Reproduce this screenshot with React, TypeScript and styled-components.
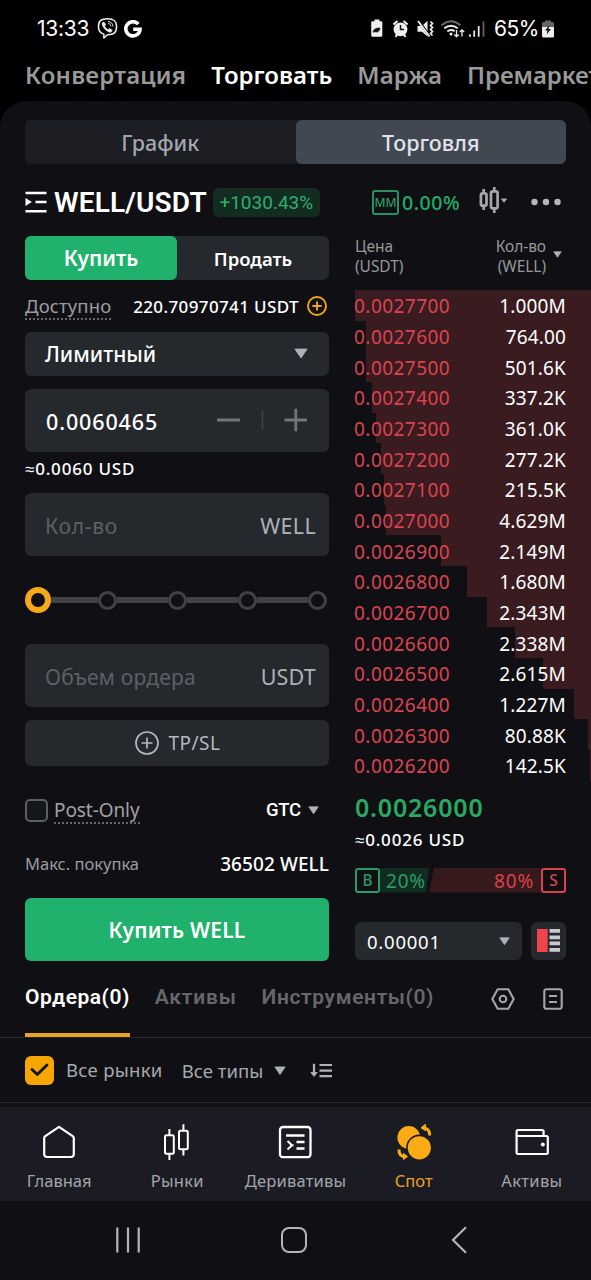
import React from 'react';
import styled, { createGlobalStyle } from 'styled-components';

const asks = [
  { price: '0.0027700', amount: '1.000M', depth: 236 },
  { price: '0.0027600', amount: '764.00', depth: 225 },
  { price: '0.0027500', amount: '501.6K', depth: 225 },
  { price: '0.0027400', amount: '337.2K', depth: 219 },
  { price: '0.0027300', amount: '361.0K', depth: 215 },
  { price: '0.0027200', amount: '277.2K', depth: 210 },
  { price: '0.0027100', amount: '215.5K', depth: 207 },
  { price: '0.0027000', amount: '4.629M', depth: 205 },
  { price: '0.0026900', amount: '2.149M', depth: 150 },
  { price: '0.0026800', amount: '1.680M', depth: 124 },
  { price: '0.0026700', amount: '2.343M', depth: 104 },
  { price: '0.0026600', amount: '2.338M', depth: 76 },
  { price: '0.0026500', amount: '2.615M', depth: 48 },
  { price: '0.0026400', amount: '1.227M', depth: 17 },
  { price: '0.0026300', amount: '80.88K', depth: 3 },
  { price: '0.0026200', amount: '142.5K', depth: 1 },
];

const Caret = ({ width = 14, color = '#adb1b8' }: { width?: number; color?: string }) => (
  <svg width={width} height={width * 0.8} viewBox="0 0 14 11" fill={color} stroke={color} strokeLinejoin="round">
    <path d="M1 1h12L7 9.8z" />
  </svg>
);

const StatusIcons = () => (
  <svg width="118" height="22" viewBox="0 0 118 22" fill="none" stroke="#eee" strokeWidth="1.6">
    {/* power saving */}
    <path d="M3.500 3.200h2V1.600h5v1.600h1.500q1.300 0 1.300 1.300v13q0 1.300-1.300 1.300H3.500q-1.300 0-1.300-1.300v-13q0-1.300 1.300-1.300z" fill="#eee" stroke="none" />
    <path d="M4.200 14.500c-.3-3 2.500-4.500 6.700-4.500-.2 3.300-2.500 4.700-5.200 3.800l3.400-2" fill="#111" stroke="#111" strokeWidth=".7" />
    {/* alarm */}
    <circle cx="31.500" cy="11.300" r="6.900" fill="#eee" stroke="none" />
    <path d="M31.500 7v4.500h3.500" stroke="#111" strokeWidth="1.500" />
    <path d="M24.500 6.500l4-3.500M38.500 6.500l-4-3.500M26.500 18.800l1.500-2M36.500 18.800l-1.500-2" strokeWidth="2.200" />
    {/* muted */}
    <path d="M48.500 8h4.500l5.500-5.300v15.800L53 13.700h-4.500z" fill="#eee" stroke="none" />
    <path d="M49.500 2.500l11 15.500" stroke="#000" strokeWidth="2.600" />
    <path d="M49 3l11.500 15.500" strokeWidth="1.900" />
    <path d="M61.500 3.500l2 2-2 2 2 2-2 2 2 2-2 2 2 2" strokeWidth="1.700" />
    {/* wifi */}
    <path d="M72.500 7.200q9.500-8 19 0" stroke="#666" strokeWidth="2" />
    <path d="M75.300 10.300q6.700-5.200 13.400 0M78.300 13.500q3.700-2.800 7.300-.3" strokeWidth="1.900" />
    <circle cx="82" cy="16" r="1.500" fill="#eee" stroke="none" />
    <path d="M87.500 12v6.500M85.300 16.500l2.200 2.200 2.200-2.200M93 18.500V12M90.800 14l2.200-2.200L95.200 14" strokeWidth="1.300" />
    {/* signal */}
    <path d="M101 18.800v-2.600M105.200 18.800v-6.400M109.700 18.800V8" strokeWidth="1.700" />
    <path d="M114.500 18.800V3.500" stroke="#666" strokeWidth="1.700" />
  </svg>
);

const ViberIcon = () => (
  <svg width="21" height="23" viewBox="0 0 22 23" fill="none" stroke="#eee" strokeWidth="1.600" strokeLinejoin="round">
    <path d="M11 1.200c6.500 0 9.500 2 9.500 8.300 0 6.200-2.600 8.600-9.500 8.500l-3.800 3.400v-4C2.800 16.200 1.500 14 1.500 9.500c0-6.300 3-8.300 9.500-8.300z" />
    <path d="M6.800 4.800c-1.500.8-1.700 1.800-1 3.500 1.400 3.400 3.700 5.700 7.200 7 1.500.5 2.500-.3 2.900-1.600.1-.6-2.300-2.300-2.900-2.200-.6.200-.9 1.200-1.500 1.100-1.500-.5-3-2-3.500-3.600 0-.6 1-.9 1-1.500 0-.7-1.600-2.800-2.200-2.700z" fill="#eee" stroke="#eee" strokeWidth=".6" />
    <path d="M11.500 4.200c3.200.1 5 2 5.200 5.200M11.700 6.300c1.800.2 2.700 1.200 2.900 3" strokeWidth="1" />
  </svg>
);

const GoogleIcon = () => (
  <svg width="18" height="18" viewBox="0 0 18 18" fill="none" stroke="#fff" strokeWidth="3.600">
    <path d="M14.300 4.100A7.100 7.100 0 1 0 16 9.300H9.200" />
  </svg>
);

const ChargeIcon = () => (
  <svg width="12" height="18" viewBox="0 0 12 18">
    <path d="M1.500 2H3V.5h6V2h1.500Q12 2 12 3.500V8H0V3.500Q0 2 1.500 2z" fill="#666" />
    <path d="M0 7h12v9q0 1.500-1.500 1.500h-9Q0 17.500 0 16z" fill="#eee" />
    <path d="M7.500 5L3 10.500h2.500l-.8 4 4.300-5.500H6.500z" fill="#111" />
  </svg>
);

const MenuIcon = () => (
  <svg width="22" height="22" viewBox="0 0 22 22" fill="none" stroke="#fff" strokeWidth="2.500">
    <path d="M.5 2h21M10.500 11h11M.5 20.200h21" />
    <path d="M.5 7v8l6.300-4z" fill="#fff" stroke="none" />
  </svg>
);

const CandleMenuIcon = () => (
  <svg width="29" height="28" viewBox="0 0 29 28" fill="none" stroke="#a3a6ad" strokeWidth="2.700">
    <rect x="1.900" y="7.300" width="5.600" height="12.400" rx="1.800" />
    <rect x="12" y="5.300" width="6.600" height="17" rx="1.800" />
    <path d="M4.700 3v4M4.700 20v4M15.300 1v4M15.300 22v5" />
    <path d="M22.500 13h5l-2.500 3.200z" fill="#a3a6ad" strokeWidth="1" strokeLinejoin="round" />
  </svg>
);

const DotsIcon = () => (
  <svg width="30" height="8" viewBox="0 0 30 8" fill="#b4b7bd">
    <circle cx="3.500" cy="4" r="3.200" />
    <circle cx="15" cy="4" r="3.200" />
    <circle cx="26.500" cy="4" r="3.200" />
  </svg>
);

const PlusCircle = ({ size, color, weight }: { size: number; color: string; weight: number }) => (
  <svg width={size} height={size} viewBox={`0 0 ${size} ${size}`} fill="none" stroke={color} strokeWidth={weight}>
    <circle cx={size / 2} cy={size / 2} r={size / 2 - 1} />
    <path d={`M${size / 2} ${size * 0.27}v${size * 0.46}M${size * 0.27} ${size / 2}h${size * 0.46}`} />
  </svg>
);

const StepperIcon = () => (
  <svg width="92" height="24" viewBox="0 0 92 24" fill="none" stroke="#717479" strokeWidth="2.800">
    <path d="M1 12h23M68.500 12H91M79.800 .8v22.400" />
    <path d="M46.500 2.500v19" stroke="#42454a" strokeWidth="1.500" />
  </svg>
);

const BookModeIcon = () => (
  <svg width="23" height="23" viewBox="0 0 23 23">
    <path d="M0 0h10.700v23H0z" fill="#ef454a" />
    <path d="M12.500 0H23v3.800H12.500zM12.500 6.400H23v3.800H12.500zM12.500 12.600H23v3.600H12.500zM12.500 19H23v3.800H12.500z" fill="#c9cbce" />
  </svg>
);

const HexIcon = () => (
  <svg width="24" height="22" viewBox="0 0 24 22" fill="none" stroke="#a5a6aa" strokeWidth="2.100" strokeLinejoin="round">
    <path d="M6.700 1.300h10.600L22.700 11l-5.400 9.700H6.700L1.300 11z" />
    <circle cx="12" cy="11" r="3.300" />
  </svg>
);

const ListIcon = () => (
  <svg width="20" height="22" viewBox="0 0 20 22" fill="none" stroke="#a5a6aa" strokeWidth="2.100">
    <rect x="1.300" y="1.200" width="17.400" height="19.600" rx="2" />
    <path d="M6 8h8M6 14h8" />
  </svg>
);

const SortIcon = () => (
  <svg width="22" height="15" viewBox="0 0 22 15" fill="none" stroke="#b0b1b5" strokeWidth="2.200">
    <path d="M4 .8v10M9.500 2H22M9.500 7.700H22M9.500 13.200H22" />
    <path d="M.8 9.500h6.400L4 13.500z" fill="#b0b1b5" strokeWidth=".8" />
  </svg>
);

const HomeIcon = () => (
  <svg width="36" height="36" viewBox="0 0 36 36" fill="none" stroke="#fff" strokeWidth="2.200" strokeLinejoin="round">
    <path d="M18 2.800L31.700 12.200q1.100.8 1.100 2.200V30q0 3-3 3H6.200q-3 0-3-3V14.400q0-1.400 1.100-2.200z" />
  </svg>
);

const MarketsIcon = () => (
  <svg width="36" height="36" viewBox="0 0 36 36" fill="none" stroke="#fff" strokeWidth="2">
    <rect x="6" y="11.200" width="8.800" height="18.600" rx="1.500" />
    <rect x="20" y="6.700" width="8.800" height="18.600" rx="1.500" />
    <path d="M10.400 5v6M10.400 30v6M24.400 .2v6M24.400 25.500v6" />
  </svg>
);

const DerivativesIcon = () => (
  <svg width="36" height="36" viewBox="0 0 36 36" fill="none" stroke="#fff" strokeWidth="2.300">
    <rect x="3" y="3" width="30.500" height="30.200" rx="3" />
    <path d="M9 11.500h18.500M19.500 18h8M19.500 24.500h8" />
    <path d="M10.500 17l4.500 4.200-4.500 4.200M13 21.200h3.500" strokeWidth="2" />
  </svg>
);

const SpotIcon = () => (
  <svg width="36" height="36" viewBox="0 0 36 36" fill="#fbac15">
    <circle cx="12.800" cy="13.500" r="11.400" />
    <circle cx="23.300" cy="23.800" r="12.400" stroke="#1b1c23" strokeWidth="1.600" />
    <path d="M27 4.200c4.800-.2 6.700 2.500 6.700 7.300" fill="none" stroke="#fbac15" strokeWidth="3" />
    <path d="M29.500 .2v6.500L25 3.800z" stroke="#fbac15" strokeWidth="1" strokeLinejoin="round" />
    <path d="M3 25.500c-.2 4.500 1.800 7.200 6 7.200" fill="none" stroke="#fbac15" strokeWidth="3" />
    <path d="M7.500 29.500v6L11.500 32.500z" stroke="#fbac15" strokeWidth="1" strokeLinejoin="round" />
  </svg>
);

const WalletIcon = () => (
  <svg width="36" height="36" viewBox="0 0 36 36" fill="none" stroke="#fff" strokeWidth="2.200" strokeLinejoin="round">
    <path d="M2.600 12.200V7.500q0-1.500 1.500-1.500h24q1.500 0 1.500 1.500v4.700" />
    <path d="M2.600 12h29.800q1.400 0 1.400 1.400v15.200q0 1.400-1.400 1.400H4q-1.400 0-1.400-1.400z" />
    <circle cx="28.800" cy="20.500" r="2" fill="#fff" stroke="none" />
  </svg>
);

const navItems = [
  { label: 'Главная', icon: <HomeIcon />, spacing: 0 },
  { label: 'Рынки', icon: <MarketsIcon />, spacing: 0.3 },
  { label: 'Деривативы', icon: <DerivativesIcon />, spacing: 0.18 },
  { label: 'Спот', icon: <SpotIcon />, spacing: 0, active: true },
  { label: 'Активы', icon: <WalletIcon />, spacing: 0.35 },
];

const App = () => (
  <>
    <GlobalStyle />
    <Screen>
      <StatusBar>
        <StatusGroup>
          <Clock>13:33</Clock>
          <ViberIcon />
          <GoogleIcon />
        </StatusGroup>
        <StatusGroup>
          <StatusIcons />
          <Percent>65%</Percent>
          <ChargeIcon />
        </StatusGroup>
      </StatusBar>

      <TopTabs>
        <TopTab $spacing={0.2}>Конвертация</TopTab>
        <TopTab $active>Торговать</TopTab>
        <TopTab $spacing={0.15}>Маржа</TopTab>
        <TopTab $spacing={-0.1}>Премаркет</TopTab>
      </TopTabs>

      <Panel>
        <Segmented>
          <Segment>График</Segment>
          <Segment $active>Торговля</Segment>
        </Segmented>

        <PairRow>
          <MenuIcon />
          <PairName>WELL/USDT</PairName>
          <Change>+1030.43%</Change>
          <PairTools>
            <MarketMaker>MM</MarketMaker>
            <Fee>0.00%</Fee>
            <CandleMenuIcon />
            <DotsIcon />
          </PairTools>
        </PairRow>

        <Trade>
          <Form>
            <Sides>
              <Side $active>Купить</Side>
              <Side>Продать</Side>
            </Sides>
            <Available>
              <Hint>Доступно</Hint>
              <Balance>
                220.70970741 USDT
                <PlusCircle size={20} color="#f0a616" weight={1.900} />
              </Balance>
            </Available>
            <OrderType>
              Лимитный
              <Caret />
            </OrderType>
            <Field>
              <Price>0.0060465</Price>
              <StepperIcon />
            </Field>
            <Approx>≈0.0060 USD</Approx>
            <Field>
              <Placeholder $spacing={0.75}>Кол-во</Placeholder>
              <Unit $spacing={0.3}>WELL</Unit>
            </Field>
            <Slider>
              <Thumb />
              <Track $first /><Stop />
              <Track /><Stop />
              <Track /><Stop />
              <Track /><Stop />
            </Slider>
            <Field>
              <Placeholder $spacing={0.22}>Объем ордера</Placeholder>
              <Unit $spacing={0.2}>USDT</Unit>
            </Field>
            <TpSl>
              <PlusCircle size={24} color="#b4b8c0" weight={1.700} />
              TP/SL
            </TpSl>
            <Options>
              <Checkbox />
              <PostOnly>Post-Only</PostOnly>
              <Tif>
                GTC
                <Caret width={11} />
              </Tif>
            </Options>
            <MaxRow>
              <MaxLabel>Макс. покупка</MaxLabel>
              <MaxValue>36502 WELL</MaxValue>
            </MaxRow>
            <BuyButton>Купить WELL</BuyButton>
          </Form>

          <Book>
            <BookHead>
              <HeadCell>Цена<br />(USDT)</HeadCell>
              <HeadCell $right>Кол-во<br />(WELL)</HeadCell>
              <Caret width={9} />
            </BookHead>
            {asks.map((ask) => (
              <BookRow key={ask.price} style={{ backgroundSize: `${ask.depth}px 100%` }}>
                <AskPrice>{ask.price}</AskPrice>
                <Amount>{ask.amount}</Amount>
              </BookRow>
            ))}
            <LastPrice>0.0026000</LastPrice>
            <LastUsd>≈0.0026 USD</LastUsd>
            <Ratio>
              <RatioBadge>B</RatioBadge>
              <BuyShare>20%</BuyShare>
              <SellShare>80%</SellShare>
              <RatioBadge $sell>S</RatioBadge>
            </Ratio>
            <BookFooter>
              <Step>
                0.00001
                <Caret width={11} />
              </Step>
              <BookMode><BookModeIcon /></BookMode>
            </BookFooter>
          </Book>
        </Trade>

        <OrderTabs>
          <OrderTab $active $spacing={0.5}>Ордера(0)</OrderTab>
          <OrderTab $spacing={0.8}>Активы</OrderTab>
          <OrderTab $spacing={0.62}>Инструменты(0)</OrderTab>
          <OrderTools>
            <HexIcon />
            <ListIcon />
          </OrderTools>
        </OrderTabs>

        <Filters>
          <Checked>
            <svg width="19" height="14" viewBox="0 0 19 14" fill="none" stroke="#15120a" strokeWidth="2.800" strokeLinecap="round" strokeLinejoin="round">
              <path d="M2 6.500l5.300 5L17 2" />
            </svg>
          </Checked>
          <FilterText>Все рынки</FilterText>
          <TypeFilter>
            Все типы
            <Caret width={12} />
          </TypeFilter>
          <SortIcon />
        </Filters>
      </Panel>

      <BottomNav>
        {navItems.map((item) => (
          <NavItem key={item.label} $active={item.active} $spacing={item.spacing}>
            {item.icon}
            {item.label}
          </NavItem>
        ))}
      </BottomNav>

      <SystemNav>
        <svg width="26" height="26" viewBox="0 0 26 26" stroke="#b5b3b8" strokeWidth="2.200">
          <path d="M2.300 .5v25M13 .5v25M23.700 .5v25" />
        </svg>
        <HomeKey />
        <svg width="16" height="28" viewBox="0 0 16 28" fill="none" stroke="#b5b3b8" strokeWidth="2.200">
          <path d="M15 1.200L2 14l13 12.800" />
        </svg>
      </SystemNav>
    </Screen>
  </>
);

interface Spaced {
  $spacing?: number;
}

interface Toggle {
  $active?: boolean;
}

const GlobalStyle = createGlobalStyle`
  * {
    box-sizing: border-box;
  }

  body {
    margin: 0;
    background: #000;
  }

  svg {
    display: block;
    flex: none;
  }
`;

const Screen = styled.div`
  width: 591px;
  height: 1280px;
  display: flex;
  flex-direction: column;
  overflow: hidden;
  background: #000;
  color: #fff;
  font-family: 'Noto Sans', sans-serif;
  white-space: nowrap;
`;

const StatusBar = styled.header`
  height: 56px;
  padding: 1px 37px 0 37px;
  display: flex;
  align-items: center;
  justify-content: space-between;
  font-family: 'Inter', sans-serif;
  font-size: 21px;
`;

const StatusGroup = styled.div`
  display: flex;
  align-items: center;
  gap: 6px;
`;

const Clock = styled.span`
  margin-right: 2px;
  letter-spacing: -0.25px;
`;

const Percent = styled.span`
  margin: 0 -3px 0 1px;
  letter-spacing: -0.5px;
`;

const TopTabs = styled.nav`
  height: 45px;
  padding: 0 0 9px 25px;
  display: flex;
  align-items: center;
  gap: 25px;
`;

const TopTab = styled.span<Toggle & Spaced>`
  font-size: 24px;
  font-weight: 600;
  letter-spacing: ${(props) => props.$spacing || 0}px;
  color: ${(props) => (props.$active ? '#fff' : '#9a9a9a')};
`;

const Panel = styled.main`
  height: 1006px;
  flex: none;
  padding-top: 19px;
  display: flex;
  flex-direction: column;
  border-radius: 26px 26px 0 0;
  background: #101014;
`;

const Segmented = styled.div`
  height: 44px;
  margin: 0 25px;
  display: grid;
  grid-template-columns: 1fr 1fr;
  border-radius: 6px;
  background: #1d1d24;
`;

const Segment = styled.div<Toggle>`
  display: flex;
  align-items: center;
  justify-content: center;
  border-radius: 6px;
  font-size: 21.5px;
  font-weight: 500;
  background: ${(props) => (props.$active ? '#414852' : 'transparent')};
  color: ${(props) => (props.$active ? '#e0e4ec' : '#a3a6af')};
`;

const PairRow = styled.div`
  height: 72px;
  padding: 4px 30px 0 25px;
  display: flex;
  align-items: center;
`;

const PairName = styled.span`
  margin-left: 7px;
  font-family: 'Roboto', sans-serif;
  font-size: 28px;
  font-weight: 600;
  letter-spacing: 0.15px;
`;

const Change = styled.span`
  width: 107px;
  height: 29px;
  margin-left: 6px;
  border-radius: 6px;
  background: #132c22;
  color: #2fae6e;
  font-family: 'Roboto', sans-serif;
  font-size: 19px;
  line-height: 29px;
  text-align: center;
`;

const PairTools = styled.div`
  margin-left: auto;
  display: flex;
  align-items: center;
`;

const MarketMaker = styled.span`
  width: 27px;
  height: 25px;
  border: 2px solid #2a8f60;
  border-radius: 3px;
  color: #2d9a67;
  font-size: 12px;
  font-weight: 500;
  line-height: 21px;
  text-align: center;
`;

const Fee = styled.span`
  margin: 0 19px 0 3px;
  color: #22ac6b;
  font-size: 19.5px;
  font-weight: 500;
  letter-spacing: 0.5px;

  & + svg {
    margin: -5px 23px 0 0;
  }
`;

const Trade = styled.section`
  height: 725px;
  padding-left: 25px;
  display: grid;
  grid-template-columns: 304px 236px;
  justify-content: space-between;
`;

const Form = styled.div`
  display: flex;
  flex-direction: column;
`;

const Sides = styled.div`
  height: 44px;
  display: grid;
  grid-template-columns: 1fr 1fr;
  border-radius: 6px;
  background: #25282c;
`;

const Side = styled.div<Toggle>`
  display: flex;
  align-items: center;
  justify-content: center;
  border-radius: 6px;
  background: ${(props) => (props.$active ? '#20b26c' : 'transparent')};
  font-size: ${(props) => (props.$active ? 21 : 18.5)}px;
  font-weight: 600;
`;

const Available = styled.div`
  height: 52px;
  display: flex;
  align-items: center;
  justify-content: space-between;
`;

const Hint = styled.span`
  margin-top: 1px;
  border-bottom: 2px dotted #66676b;
  color: #9b9ca0;
  font-size: 18.5px;
  line-height: 24px;
  letter-spacing: 0.15px;
`;

const Balance = styled.span`
  display: flex;
  align-items: center;
  gap: 8px;
  margin-right: 2px;
  font-size: 17px;
  font-weight: 500;
  letter-spacing: 0.38px;
`;

const OrderType = styled.div`
  height: 44px;
  margin-bottom: 13px;
  padding: 0 21px 0 20px;
  display: flex;
  align-items: center;
  justify-content: space-between;
  border-radius: 6px;
  background: #25282c;
  font-size: 21px;
  font-weight: 500;
`;

const Field = styled.div`
  height: 63px;
  padding: 2px 13px 0 20px;
  display: flex;
  align-items: center;
  justify-content: space-between;
  border-radius: 6px;
  background: #25282c;

  svg {
    margin: -3px 8px 0 0;
  }
`;

const Price = styled.span`
  margin-left: 1px;
  font-size: 21.5px;
  font-weight: 500;
  letter-spacing: 0.88px;
`;

const Placeholder = styled.span<Spaced>`
  color: #5d6065;
  font-size: 21px;
  letter-spacing: ${(props) => props.$spacing}px;
`;

const Unit = styled.span<Spaced>`
  color: #adb1b8;
  font-size: 21.5px;
  letter-spacing: ${(props) => props.$spacing}px;
`;

const Approx = styled.div`
  height: 41px;
  font-size: 17px;
  font-weight: 500;
  line-height: 33px;
  letter-spacing: 0.81px;
`;

const Slider = styled.div`
  height: 88px;
  padding-right: 2px;
  display: flex;
  align-items: center;
`;

const Thumb = styled.div`
  width: 26px;
  height: 26px;
  border: 6px solid #f7a81b;
  border-radius: 50%;
`;

/* the thumb is wider than a stop, so the first stretch is shorter */
const Track = styled.div<{ $first?: boolean }>`
  flex: ${(props) => (props.$first ? '0 0 47.4px' : 1)};
  height: 6px;
  background: #414146;
`;

const Stop = styled.div`
  width: 19px;
  height: 19px;
  border: 3px solid #414146;
  border-radius: 50%;
`;

const TpSl = styled.div`
  height: 46px;
  margin-top: 13px;
  padding-left: 2px;
  display: flex;
  align-items: center;
  justify-content: center;
  gap: 9px;
  border-radius: 6px;
  background: #25282c;
  color: #b4b8c0;
  font-size: 19px;
  letter-spacing: 0.5px;
`;

const Options = styled.div`
  height: 88px;
  display: flex;
  align-items: center;
`;

const Checkbox = styled.span`
  width: 23px;
  height: 23px;
  border: 2px solid #5c5f63;
  border-radius: 5px;
  background: #14171a;
`;

const PostOnly = styled.span`
  margin: 1px 0 0 6px;
  border-bottom: 2px dotted #66676b;
  color: #a0a1a5;
  font-size: 19px;
  line-height: 24px;
  letter-spacing: -0.08px;
`;

const Tif = styled.span`
  margin: 0 10px 0 auto;
  display: flex;
  align-items: center;
  gap: 7px;
  font-family: 'Roboto', sans-serif;
  font-size: 18.5px;
  font-weight: 500;
  letter-spacing: -0.2px;
`;

const MaxRow = styled.div`
  height: 20px;
  margin-bottom: 24px;
  padding-bottom: 1px;
  display: flex;
  align-items: center;
  justify-content: space-between;
`;

const MaxLabel = styled.span`
  color: #9b9ca0;
  font-size: 16.5px;
`;

const MaxValue = styled.span`
  font-size: 19px;
  font-weight: 500;
  letter-spacing: 0.08px;
`;

const BuyButton = styled.button`
  height: 63px;
  padding: 0;
  border: none;
  border-radius: 6px;
  background: #20b26c;
  color: #fff;
  font: 600 21px 'Noto Sans', sans-serif;
  letter-spacing: 0.2px;
`;

const Book = styled.div`
  display: flex;
  flex-direction: column;
`;

const BookHead = styled.div`
  height: 54px;
  padding: 0 29px 14px 0;
  display: flex;
  align-items: center;
  gap: 7px;

  svg {
    margin-top: -3px;
  }
`;

const HeadCell = styled.div<{ $right?: boolean }>`
  margin-left: ${(props) => (props.$right ? 'auto' : 0)};
  color: #96979b;
  font-size: 15.5px;
  line-height: 20px;
  letter-spacing: -0.05px;
  text-align: ${(props) => (props.$right ? 'right' : 'left')};
`;

const BookRow = styled.div`
  height: 30.667px;
  padding: 2px 25px 0 0;
  display: flex;
  align-items: center;
  justify-content: space-between;
  background: linear-gradient(#3a1b1f, #3a1b1f) right top no-repeat;
  font-size: 19px;
`;

const AskPrice = styled.span`
  margin-left: -1px;
  color: #dc4350;
  letter-spacing: 0.46px;
`;

const Amount = styled.span`
  letter-spacing: 0.15px;
`;

const LastPrice = styled.div`
  height: 43px;
  padding-top: 10px;
  color: #2aa862;
  font-size: 25px;
  font-weight: 600;
  line-height: 33px;
  letter-spacing: 0.8px;
`;

const LastUsd = styled.div`
  height: 44px;
  font-size: 17px;
  font-weight: 500;
  line-height: 32px;
  letter-spacing: 0.81px;
`;

const Ratio = styled.div`
  height: 25px;
  margin-right: 25px;
  display: flex;
  font-size: 19px;
  line-height: 27px;
`;

const RatioBadge = styled.span<{ $sell?: boolean }>`
  width: 25px;
  border: 2px solid ${(props) => (props.$sell ? '#d9424c' : '#289a63')};
  border-radius: 3px;
  color: ${(props) => (props.$sell ? '#d9424c' : '#289a63')};
  font-size: 15.5px;
  font-weight: 500;
  line-height: 21px;
  text-align: center;
`;

const BuyShare = styled.span`
  width: 49px;
  padding-left: 6px;
  background: #112b20;
  color: #2a9d66;
  letter-spacing: 0.8px;
  clip-path: polygon(0 0, 100% 0, calc(100% - 3px) 100%, 0 100%);
`;

const SellShare = styled.span`
  flex: 1;
  padding-right: 7px;
  background: #35191d;
  color: #d9424c;
  letter-spacing: 0.8px;
  text-align: right;
  clip-path: polygon(5px 0, 100% 0, 100% 100%, 0 100%);
`;

const BookFooter = styled.div`
  margin: 29px 25px 0 0;
  display: flex;
  justify-content: space-between;
`;

const Step = styled.div`
  width: 167px;
  height: 38px;
  padding: 1px 12px 0;
  display: flex;
  align-items: center;
  justify-content: space-between;
  border-radius: 6px;
  background: #25282c;
  font-size: 18.5px;
  letter-spacing: 0.76px;
`;

const BookMode = styled.div`
  width: 35px;
  height: 38px;
  display: flex;
  align-items: center;
  justify-content: center;
  border-radius: 6px;
  background: #25282c;
`;

const OrderTabs = styled.nav`
  height: 77px;
  padding: 0 28px 0 25px;
  display: flex;
  gap: 25px;
  border-bottom: 1px solid #28282b;
`;

const OrderTab = styled.span<Toggle & Spaced>`
  display: flex;
  align-items: center;
  border-bottom: 4px solid ${(props) => (props.$active ? '#e9a127' : 'transparent')};
  color: ${(props) => (props.$active ? '#fff' : '#66676b')};
  font-family: 'Roboto', sans-serif;
  font-size: 21px;
  font-weight: 600;
  letter-spacing: ${(props) => props.$spacing}px;
`;

const OrderTools = styled.div`
  margin: 0 0 0 auto;
  display: flex;
  align-items: center;
  gap: 28px;
`;

const Filters = styled.div`
  height: 65px;
  padding: 0 25px;
  display: flex;
  align-items: center;
  border-bottom: 1px solid #28282b;
  color: #a8a9ad;
  font-size: 18.5px;
`;

const Checked = styled.span`
  width: 29px;
  height: 29px;
  display: flex;
  align-items: center;
  justify-content: center;
  border-radius: 6px;
  background: #f7a600;
`;

const FilterText = styled.span`
  margin: -2px 19px 0 12px;
  letter-spacing: 0.3px;
`;

const TypeFilter = styled.span`
  margin: 1px 24px 0 0;
  display: flex;
  align-items: center;
  gap: 11px;
  letter-spacing: 0.05px;
`;

const BottomNav = styled.nav`
  height: 94px;
  flex: none;
  display: grid;
  grid-template-columns: repeat(5, 1fr);
  background: #1b1c23;
`;

const NavItem = styled.div<Toggle & Spaced>`
  padding-top: 17px;
  display: flex;
  flex-direction: column;
  align-items: center;
  gap: 9px;
  color: ${(props) => (props.$active ? '#e9a127' : '#a3a5ab')};
  font-size: 16.5px;
  letter-spacing: ${(props) => props.$spacing}px;
`;

const SystemNav = styled.footer`
  flex: 1;
  padding: 0 124px 2px 115px;
  display: flex;
  align-items: center;
  justify-content: space-between;
  background: #101014;
`;

const HomeKey = styled.span`
  width: 26px;
  height: 26px;
  margin-right: 5px;
  border: 2px solid #b5b3b8;
  border-radius: 8px;
`;

export default App;
